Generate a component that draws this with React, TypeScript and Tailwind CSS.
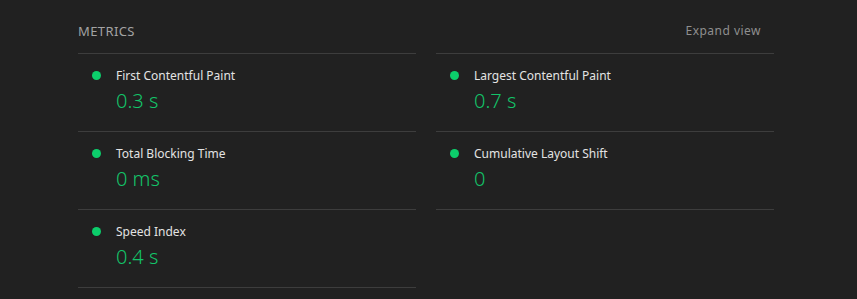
import React from 'react';

type Metric = { label: string; value: string };

const left: Metric[] = [
  { label: 'First Contentful Paint', value: '0.3 s' },
  { label: 'Total Blocking Time', value: '0 ms' },
  { label: 'Speed Index', value: '0.4 s' },
];

const right: Metric[] = [
  { label: 'Largest Contentful Paint', value: '0.7 s' },
  { label: 'Cumulative Layout Shift', value: '0' },
];

const MetricRow = ({ m }: { m: Metric }) => (
  <div className="flex h-[78px] border-b border-[#3d3d3d] pl-[14px] pt-[14px]">
    <span className="mt-[3px] h-[9px] w-[9px] shrink-0 rounded-full bg-[#0cce6b]" />
    <div className="ml-[15px] flex flex-col">
      <span className="text-[12px] leading-4 text-[#e3e3e3]">{m.label}</span>
      <span className="mt-1 text-[20px] font-light leading-[26px] text-[#13c469]">{m.value}</span>
    </div>
  </div>
);

const App = () => {
  return (
    <div
      className="min-h-screen w-full bg-[#212121] pl-[78px]"
      style={{ fontFamily: '"Noto Sans", "Open Sans", sans-serif' }}
    >
      <div className="w-[696px]">
        <div className="flex h-[53px] items-start justify-between pr-[13px] pt-[23px]">
          <span className="text-[13px] leading-4 tracking-[0.03em] text-[#a3a3a3]">METRICS</span>
          <span className="text-[12px] leading-4 tracking-[0.04em] text-[#8f8f8f]">Expand view</span>
        </div>
        <div className="grid grid-cols-2 gap-x-5">
          <div className="border-t border-[#3d3d3d]">
            {left.map((m) => (
              <MetricRow key={m.label} m={m} />
            ))}
          </div>
          <div className="border-t border-[#3d3d3d]">
            {right.map((m) => (
              <MetricRow key={m.label} m={m} />
            ))}
          </div>
        </div>
      </div>
    </div>
  );
};

export default App;
